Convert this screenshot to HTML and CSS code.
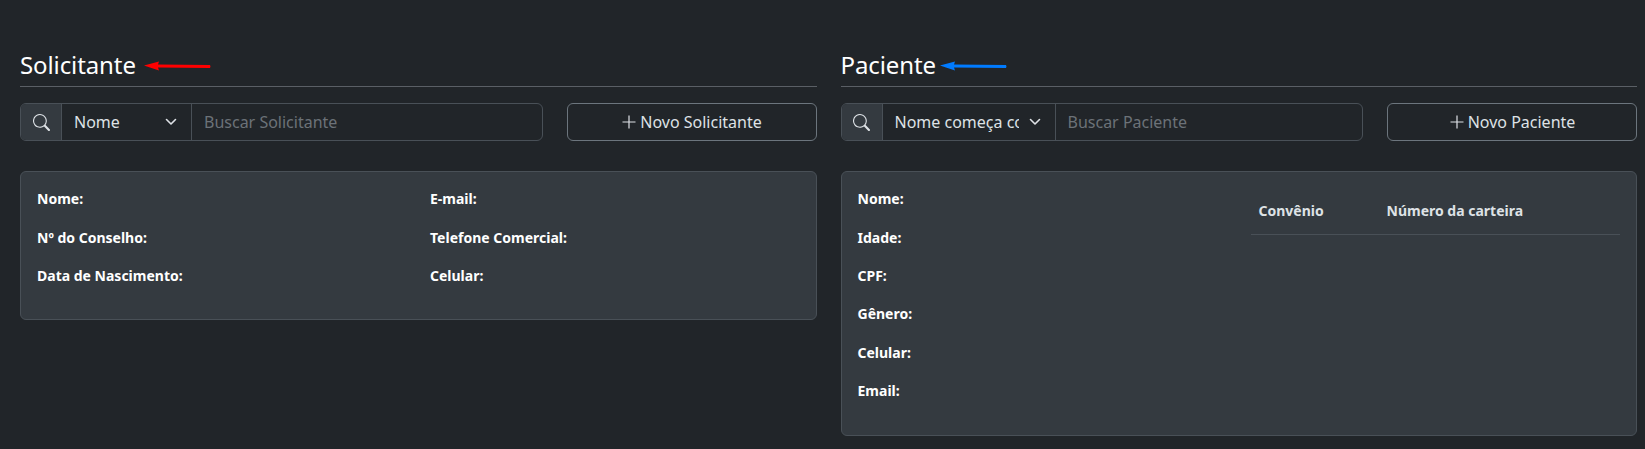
FILE: index.html
```html
<!DOCTYPE html>
<html lang="pt-BR">
<head>
<meta charset="utf-8">
<title>Solicitante e Paciente</title>
<link rel="stylesheet" href="styles.css">
</head>
<body>
<main class="page">
  <section class="col">
    <div class="title-row">
      <h2 class="title">Solicitante</h2>
      <svg class="arrow arrow-red" width="68" height="12" viewBox="0 0 68 12"><path d="M0 5.5 L15 1.5 L14 4.5 L66 5 Q67 6.5 66 8 L14 7.5 L15 10.5 Z" fill="#ff0000"/></svg>
    </div>
    <div class="toolbar">
      <div class="search">
        <span class="search-icon"><svg width="17" height="17" viewBox="0 0 16 16" fill="currentColor"><path d="M11.742 10.344a6.5 6.5 0 1 0-1.397 1.398h-.001c.03.04.062.078.098.115l3.85 3.85a1 1 0 0 0 1.415-1.414l-3.85-3.85a1.007 1.007 0 0 0-.115-.1zM12 6.5a5.5 5.5 0 1 1-11 0 5.5 5.5 0 0 1 11 0z"/></svg></span>
        <div class="select select-short"><span class="select-text">Nome</span><svg class="chev" width="16" height="16" viewBox="0 0 16 16"><path d="M3.5 5.5 8 10l4.5-4.5" fill="none" stroke="#dee2e6" stroke-width="1.6" stroke-linecap="round" stroke-linejoin="round"/></svg></div>
        <input class="search-input" type="text" placeholder="Buscar Solicitante">
      </div>
      <button class="new-btn" type="button"><svg width="16" height="16" viewBox="0 0 16 16" fill="currentColor"><path d="M7.4 1.5h1.2v5.9h5.9v1.2H8.6v5.9H7.4V8.6H1.5V7.4h5.9z"/></svg>Novo Solicitante</button>
    </div>
    <div class="card card-two">
      <div class="field-list">
        <p class="field">Nome:</p>
        <p class="field">Nº do Conselho:</p>
        <p class="field">Data de Nascimento:</p>
      </div>
      <div class="field-list">
        <p class="field">E-mail:</p>
        <p class="field">Telefone Comercial:</p>
        <p class="field">Celular:</p>
      </div>
    </div>
  </section>
  <section class="col">
    <div class="title-row">
      <h2 class="title">Paciente</h2>
      <svg class="arrow arrow-blue" width="68" height="12" viewBox="0 0 68 12"><path d="M0 5.5 L15 1.5 L14 4.5 L66 5 Q67 6.5 66 8 L14 7.5 L15 10.5 Z" fill="#007bff"/></svg>
    </div>
    <div class="toolbar">
      <div class="search">
        <span class="search-icon"><svg width="17" height="17" viewBox="0 0 16 16" fill="currentColor"><path d="M11.742 10.344a6.5 6.5 0 1 0-1.397 1.398h-.001c.03.04.062.078.098.115l3.85 3.85a1 1 0 0 0 1.415-1.414l-3.85-3.85a1.007 1.007 0 0 0-.115-.1zM12 6.5a5.5 5.5 0 1 1-11 0 5.5 5.5 0 0 1 11 0z"/></svg></span>
        <div class="select select-long"><span class="select-text">Nome começa com</span><svg class="chev" width="16" height="16" viewBox="0 0 16 16"><path d="M3.5 5.5 8 10l4.5-4.5" fill="none" stroke="#dee2e6" stroke-width="1.6" stroke-linecap="round" stroke-linejoin="round"/></svg></div>
        <input class="search-input" type="text" placeholder="Buscar Paciente">
      </div>
      <button class="new-btn" type="button"><svg width="16" height="16" viewBox="0 0 16 16" fill="currentColor"><path d="M7.4 1.5h1.2v5.9h5.9v1.2H8.6v5.9H7.4V8.6H1.5V7.4h5.9z"/></svg>Novo Paciente</button>
    </div>
    <div class="card card-patient">
      <div class="field-list">
        <p class="field">Nome:</p>
        <p class="field">Idade:</p>
        <p class="field">CPF:</p>
        <p class="field">Gênero:</p>
        <p class="field">Celular:</p>
        <p class="field">Email:</p>
      </div>
      <table class="plans">
        <thead><tr><th class="plan-a">Convênio</th><th>Número da carteira</th></tr></thead>
      </table>
    </div>
  </section>
</main>
</body>
</html>
```
FILE: styles.css
```css
* { box-sizing: border-box; }
html, body { margin: 0; height: 100%; }
body {
  background: #212529;
  color: #dee2e6;
  font-family: "Noto Sans", "Open Sans", sans-serif;
  font-size: 16px;
  overflow: hidden;
}
.page {
  display: grid;
  grid-template-columns: 1fr 1fr;
  gap: 24px;
  padding: 44px 8px 0 20px;
}
.col { min-width: 0; }
.title-row {
  display: flex;
  align-items: center;
  height: 43px;
  border-bottom: 1px solid #5a5f65;
}
.title {
  margin: 0;
  font-size: 24px;
  font-weight: 400;
  line-height: 36px;
  letter-spacing: -0.1px;
  color: #fff;
}
.arrow { margin-top: 1px; }
.arrow-red { margin-left: 8px; }
.arrow-blue { margin-left: 4px; }
.toolbar {
  display: flex;
  gap: 24px;
  margin-top: 16px;
}
.search {
  flex: 1;
  min-width: 0;
  display: flex;
  height: 38px;
  border: 1px solid #495057;
  border-radius: 6px;
  overflow: hidden;
}
.search-icon {
  flex: none;
  width: 41px;
  display: flex;
  align-items: center;
  justify-content: center;
  background: #343a40;
  border-right: 1px solid #495057;
}
.select {
  flex: none;
  display: flex;
  align-items: center;
  padding-left: 12px;
  border-right: 1px solid #495057;
  color: #dee2e6;
}
.select-short { width: 130px; }
.select-long { width: 173px; }
.select-text {
  flex: 1;
  min-width: 0;
  white-space: nowrap;
  overflow: hidden;
}
.chev { flex: none; margin: 0 12px 0 8px; }
.search-input {
  flex: 1;
  min-width: 0;
  border: 0;
  outline: 0;
  padding: 0 12px;
  background: transparent;
  color: #dee2e6;
  font: inherit;
}
.search-input::placeholder { color: #6c7278; opacity: 1; }
.new-btn {
  flex: none;
  width: 250px;
  height: 38px;
  display: flex;
  align-items: center;
  justify-content: center;
  gap: 3px;
  background: transparent;
  border: 1px solid #6c757d;
  border-radius: 6px;
  color: #dee2e6;
  font: inherit;
}
.card {
  margin-top: 30px;
  background: #343a40;
  border: 1px solid #495057;
  border-radius: 6px;
  padding: 16px;
}
.card-two {
  display: grid;
  grid-template-columns: 393px 1fr;
  height: 149px;
}
.card-patient {
  display: grid;
  grid-template-columns: 393px 1fr;
  height: 265px;
}
.field-list {
  display: flex;
  flex-direction: column;
  gap: 16px;
  margin-top: 0.2px;
}
.field {
  margin: 0;
  font-size: 14px;
  font-weight: 700;
  line-height: 22.4px;
  color: #fff;
}
.plans {
  border-collapse: collapse;
  width: 100%;
  align-self: start;
}
.plans th {
  text-align: left;
  font-size: 14px;
  font-weight: 700;
  line-height: 21px;
  padding: 12px 8px 13px;
  color: #dee2e6;
  border-bottom: 1px solid #495057;
}
.plan-a { width: 128px; }
```
